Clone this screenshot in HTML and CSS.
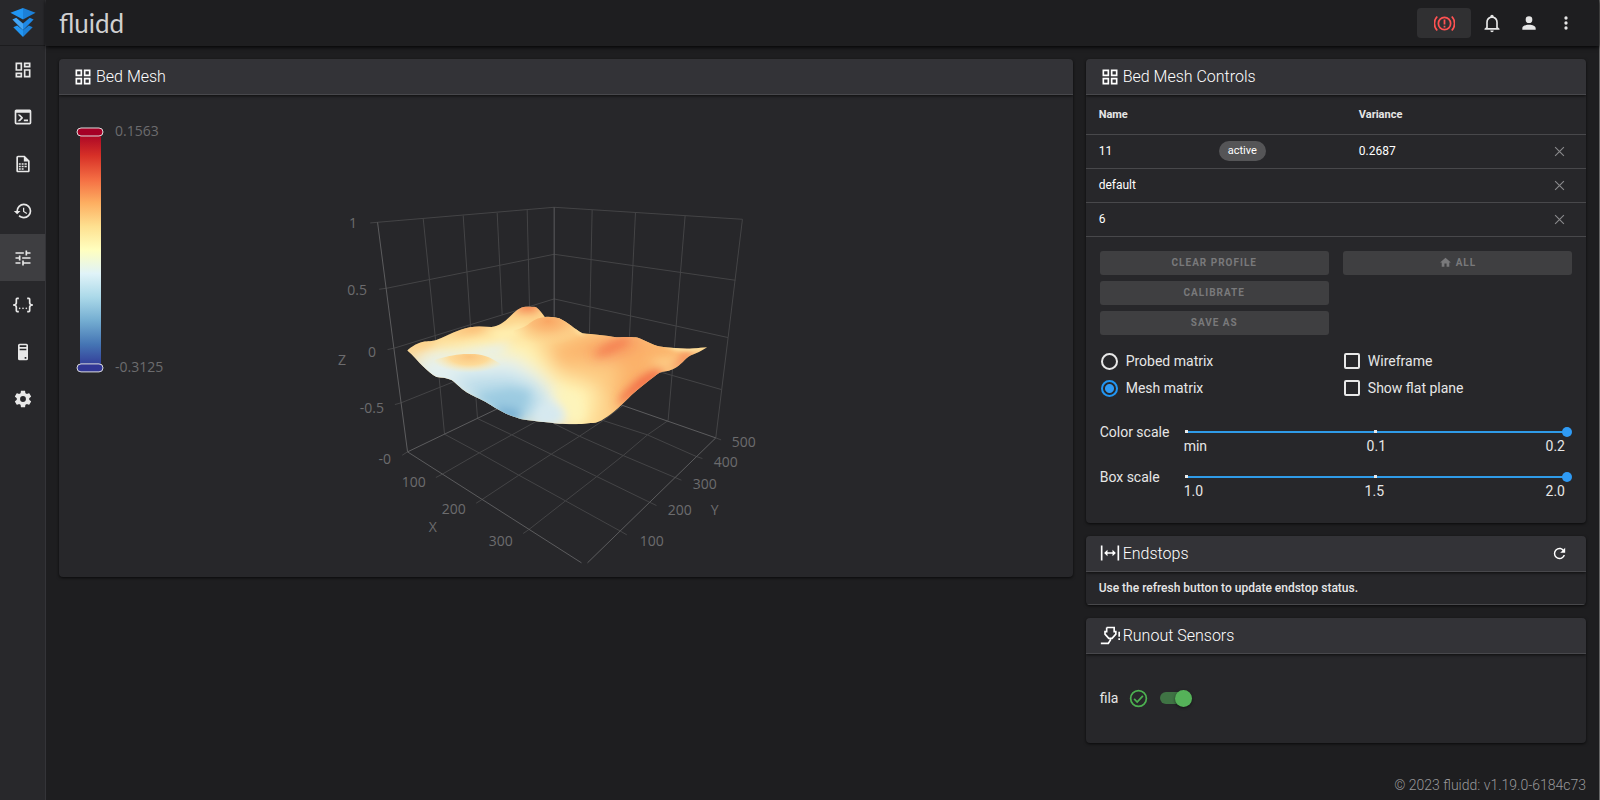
FILE: index.html
```
<!DOCTYPE html>
<html lang="en">

<head>
  <meta charset="UTF-8">
  <meta name="viewport" content="width=device-width, initial-scale=1.0">
  <title>fluidd</title>
  <link rel="stylesheet" href="styles.css">
</head>

<body>
  <!-- sidebar -->
  <nav class="sidebar">
    <a class="logo" href="#" aria-label="Home">
      <svg viewBox="0 0 26 30">
        <path fill="#2196f3" d="M0 5 13 0v12z" />
        <path fill="#1c80d8" d="M26 5 13 0v12z" />
        <path fill="#42a5f5" d="M2 12l4-2 7 6v7z" />
        <path fill="#1e88e5" d="M24 12l-4-2-7 6v7z" />
        <path fill="#2196f3" d="M3 20l4-2 6 5v7z" />
        <path fill="#1c80d8" d="M23 20l-4-2-6 5v7z" />
      </svg>
    </a>
    <a class="nav-item" href="#" aria-label="Dashboard"><svg viewBox="0 0 24 24"><path d="M19,5V7H15V5H19M9,5V11H5V5H9M19,13V19H15V13H19M9,17V19H5V17H9M21,3H13V9H21V3M11,3H3V13H11V3M21,11H13V21H21V11M11,15H3V21H11V15Z" /></svg></a>
    <a class="nav-item" href="#" aria-label="Console"><svg viewBox="0 0 24 24"><path d="M20,19V7H4V19H20M20,3A2,2 0 0,1 22,5V19A2,2 0 0,1 20,21H4A2,2 0 0,1 2,19V5C2,3.89 2.9,3 4,3H20M13,17V15H18V17H13M9.58,13L5.57,9H8.4L11.7,12.3C12.09,12.69 12.09,13.33 11.7,13.72L8.42,17H5.59L9.58,13Z" /></svg></a>
    <a class="nav-item" href="#" aria-label="Jobs"><svg viewBox="0 0 24 24"><path d="M14 2H6C4.89 2 4 2.9 4 4V20C4 21.11 4.89 22 6 22H18C19.11 22 20 21.11 20 20V8L14 2M18 20H6V4H13V9H18V20M7 11H9.3V13H7V11M10.4 11H12.7V13H10.4V11M13.8 11H16.5V13H13.8V11M7 14H9.3V16H7V14M10.4 14H12.7V16H10.4V14M13.8 14H16.5V16H13.8V14M7 17H9.3V19H7V17M10.4 17H12.7V19H10.4V17Z" /></svg></a>
    <a class="nav-item" href="#" aria-label="History"><svg viewBox="0 0 24 24"><path d="M13.5,8H12V13L16.28,15.54L17,14.33L13.5,12.25V8M13,3A9,9 0 0,0 4,12H1L4.96,16.03L9,12H6A7,7 0 0,1 13,5A7,7 0 0,1 20,12A7,7 0 0,1 13,19C11.07,19 9.32,18.21 8.06,16.94L6.64,18.36C8.27,20 10.5,21 13,21A9,9 0 0,0 22,12A9,9 0 0,0 13,3" /></svg></a>
    <a class="nav-item active" href="#" aria-label="Tune"><svg viewBox="0 0 24 24"><path d="M3,17V19H9V17H3M3,5V7H13V5H3M13,21V19H21V17H13V15H11V21H13M7,9V11H3V13H7V15H9V9H7M21,13V11H11V13H21M15,9H17V7H21V5H17V3H15V9Z" /></svg></a>
    <a class="nav-item" href="#" aria-label="Configuration"><svg viewBox="0 0 24 24"><path d="M5,3H7V5H5V10A2,2 0 0,1 3,12A2,2 0 0,1 5,14V19H7V21H5C3.93,20.73 3,20.1 3,19V15A2,2 0 0,0 1,13H0V11H1A2,2 0 0,0 3,9V5A2,2 0 0,1 5,3M19,3A2,2 0 0,1 21,5V9A2,2 0 0,0 23,11H24V13H23A2,2 0 0,0 21,15V19A2,2 0 0,1 19,21H17V19H19V14A2,2 0 0,1 21,12A2,2 0 0,1 19,10V5H17V3H19Z" /><circle cx="8" cy="16" r="1" /><circle cx="12" cy="16" r="1" /><circle cx="16" cy="16" r="1" /></svg></a>
    <a class="nav-item" href="#" aria-label="System"><svg viewBox="0 0 24 24"><path d="M8,2H16A2,2 0 0,1 18,4V20A2,2 0 0,1 16,22H8A2,2 0 0,1 6,20V4A2,2 0 0,1 8,2M8,4V6H16V4H8M16,8H8V10H16V8M16,18H14V20H16V18Z" /></svg></a>
    <a class="nav-item" href="#" aria-label="Settings"><svg viewBox="0 0 24 24"><path d="M12,15.5A3.5,3.5 0 0,1 8.5,12A3.5,3.5 0 0,1 12,8.5A3.5,3.5 0 0,1 15.5,12A3.5,3.5 0 0,1 12,15.5M19.43,12.97C19.47,12.65 19.5,12.33 19.5,12C19.5,11.67 19.47,11.34 19.43,11L21.54,9.37C21.73,9.22 21.78,8.95 21.66,8.73L19.66,5.27C19.54,5.05 19.27,4.96 19.05,5.05L16.56,6.05C16.04,5.66 15.5,5.32 14.87,5.07L14.5,2.42C14.46,2.18 14.25,2 14,2H10C9.75,2 9.54,2.18 9.5,2.42L9.13,5.07C8.5,5.32 7.96,5.66 7.44,6.05L4.95,5.05C4.73,4.96 4.46,5.05 4.34,5.27L2.34,8.73C2.21,8.95 2.27,9.22 2.46,9.37L4.57,11C4.53,11.34 4.5,11.67 4.5,12C4.5,12.33 4.53,12.65 4.57,12.97L2.46,14.63C2.27,14.78 2.21,15.05 2.34,15.27L4.34,18.73C4.46,18.95 4.73,19.03 4.95,18.95L7.44,17.94C7.96,18.34 8.5,18.68 9.13,18.93L9.5,21.58C9.54,21.82 9.75,22 10,22H14C14.25,22 14.46,21.82 14.5,21.58L14.87,18.93C15.5,18.67 16.04,18.34 16.56,17.94L19.05,18.95C19.27,19.03 19.54,18.95 19.66,18.73L21.66,15.27C21.78,15.05 21.73,14.78 21.54,14.63L19.43,12.97Z" /></svg></a>
  </nav>

  <div class="page">
    <!-- top bar -->
    <header class="app-bar">
      <span class="brand">fluidd</span>
      <div class="app-actions">
        <button class="estop" aria-label="Emergency stop">
          <svg viewBox="0 0 24 24">
            <circle cx="12" cy="12" r="7" />
            <path d="M12 7.500V13M12 14.500v2M3.700 4a11.500 11.500 0 0 0 0 16M20.300 4a11.500 11.500 0 0 1 0 16" />
          </svg>
        </button>
        <button class="icon-btn" aria-label="Notifications"><svg viewBox="0 0 24 24"><path d="M10 21H14C14 22.100 13.100 23 12 23S10 22.100 10 21M21 19V20H3V19L5 17V11C5 7.900 7 5.200 10 4.300V4C10 2.900 10.900 2 12 2S14 2.900 14 4V4.300C17 5.200 19 7.900 19 11V17L21 19M17 11C17 8.200 14.800 6 12 6S7 8.200 7 11V18H17V11Z" /></svg></button>
        <button class="icon-btn" aria-label="Account"><svg viewBox="0 0 24 24"><path d="M12,4A4,4 0 0,1 16,8A4,4 0 0,1 12,12A4,4 0 0,1 8,8A4,4 0 0,1 12,4M12,14C16.42,14 20,15.79 20,18V20H4V18C4,15.79 7.58,14 12,14Z" /></svg></button>
        <button class="icon-btn" aria-label="Menu"><svg viewBox="0 0 24 24"><circle cx="12" cy="6" r="2" /><circle cx="12" cy="12" r="2" /><circle cx="12" cy="18" r="2" /></svg></button>
      </div>
    </header>

    <main class="content">
      <!-- bed mesh -->
      <section class="card card-mesh">
        <h2 class="card-title">
          <svg viewBox="0 0 24 24"><path fill-rule="evenodd" d="M3 3H11V11H3ZM5 5V9H9V5ZM13 3H21V11H13ZM15 5V9H19V5ZM3 13H11V21H3ZM5 15V19H9V15ZM13 13H21V21H13ZM15 15V19H19V15Z" /></svg>
          Bed Mesh
        </h2>
        <svg class="chart" viewBox="59 95 1014 482" preserveAspectRatio="xMidYMid meet">
          <defs>
            <linearGradient id="scale" x1="0" y1="0" x2="0" y2="1">
              <stop offset="0" stop-color="#a50026" />
              <stop offset=".1" stop-color="#d73027" />
              <stop offset=".2" stop-color="#f46d43" />
              <stop offset=".3" stop-color="#fdae61" />
              <stop offset=".4" stop-color="#fee090" />
              <stop offset=".5" stop-color="#ffffbf" />
              <stop offset=".6" stop-color="#e0f3f8" />
              <stop offset=".7" stop-color="#abd9e9" />
              <stop offset=".8" stop-color="#74add1" />
              <stop offset=".9" stop-color="#4575b4" />
              <stop offset="1" stop-color="#313695" />
            </linearGradient>
            <radialGradient id="hill-fill" cx=".5" cy=".3" r=".55">
              <stop offset="0" stop-color="#fbc57e" />
              <stop offset=".5" stop-color="#fdda98" />
              <stop offset="1" stop-color="#fdeeb4" stop-opacity="0" />
            </radialGradient>
            <radialGradient id="knoll-fill" cx=".5" cy=".2" r=".6">
              <stop offset="0" stop-color="#f9a764" />
              <stop offset=".4" stop-color="#fbbd78" />
              <stop offset="1" stop-color="#fdd791" stop-opacity="0" />
            </radialGradient>
            <filter id="soft" x="-60%" y="-60%" width="220%" height="220%">
              <feGaussianBlur stdDeviation="15" />
            </filter>
            <filter id="softer" x="-50%" y="-50%" width="200%" height="200%">
              <feGaussianBlur stdDeviation="26" />
            </filter>
            <filter id="ridge" x="-50%" y="-50%" width="200%" height="200%">
              <feGaussianBlur stdDeviation="6" />
            </filter>
            <clipPath id="mesh">
              <path d="M22 167C35 155 55 143 75 140C90 138 100 140 115 133C145 122 175 103 210 97C235 93 255 96 275 96C300 92 315 80 335 60C355 42 365 35 385 35C400 36 405 35 410 38C420 45 428 58 435 66C450 64 465 67 478 70C505 83 525 103 548 115C580 118 620 122 650 127C680 126 700 125 712 128C735 135 755 150 780 155C820 160 850 163 880 161C895 160 910 157 922 157C905 168 890 175 872 182C855 190 845 212 820 222C805 230 790 228 780 233C755 250 720 280 695 300C670 325 640 355 615 370C600 380 590 384 580 384C560 384 545 388 520 388C490 388 465 386 450 383C425 381 405 378 385 376C355 372 335 362 320 357C295 345 275 332 255 320C235 308 215 302 200 292C180 278 170 265 155 255C140 248 125 248 110 246C95 240 85 228 70 215C55 202 40 180 22 167Z" />
            </clipPath>
            <clipPath id="hill">
              <path d="M60 210C130 184 170 177 205 177C245 176 268 183 300 206L360 270H60Z" />
            </clipPath>
            <clipPath id="knoll">
              <path d="M310 115C350 104 375 98 390 84C405 72 420 66 440 66L620 60V260H280Z" />
            </clipPath>
          </defs>

          <!-- color scale -->
          <rect x="80" y="132" width="21" height="236" fill="url(#scale)" />
          <rect class="handle" x="77" y="128" width="26" height="8" rx="4" fill="#a50026" />
          <rect class="handle" x="77" y="364" width="26" height="8" rx="4" fill="#313695" />
          <text x="115" y="136">0.1563</text>
          <text x="115" y="372">-0.3125</text>

          <!-- walls -->
          <g class="grid" transform="translate(320 190) scale(.33333)">
            <path d="M151 99L173 97L703 52L1268 88M178 298L200 295L703 193L1247 271M203 479L222 475L703 327L1225 443M225 644L243 639L703 455L1205 599" />
            <path d="M310 86L347 450L374 733M430 77L452 408L473 686M532 69L547 375M622 60L629 350M817 60L809 430M947 69L929 440M1096 78L1064 470L1045 692M1268 88L1225 443L1188 744" />
            <path class="axis" d="M173 97L222 475L263 786M703 52V380" />
          </g>
          <!-- floor -->
          <g class="grid" transform="translate(320 380) scale(.33333)">
            <path d="M348 293L367 283L478 219L576 165L703 95M469 370L485 360L597 286L694 223L779 169L850 122L910 76M610 461L626 450L737 363L831 290L910 227L983 165L1045 122" />
            <path d="M374 163L478 219L597 286L737 363L902 454L921 465M473 116L576 165L694 223L831 290L989 367L1010 377M700 130L779 169L910 227L1066 293L1085 301M780 98L850 122L983 165L1130 230L1148 236M1188 174L1204 180M247 226L263 216" />
            <path class="axis" d="M263 216L785 549M803 549L1188 174M263 216L703 5L1188 174" />
          </g>

          <!-- mesh surface -->
          <g transform="translate(400 295) scale(.33333)">
            <g clip-path="url(#mesh)">
              <rect width="960" height="420" fill="#fdd48c" />
              <g filter="url(#softer)">
                <path fill="#fff3b4" d="M60 160L260 120L400 130L430 190L470 240L590 280L570 400H460L360 260L60 200Z" />
                <path fill="#fbb26b" d="M450 160L560 120L700 110L900 150L790 220L640 390L650 300L560 250L490 220Z" />
                <path fill="#fdcb82" d="M480 190L660 200L650 290L560 260Z" />
                <path fill="#e2f0f2" d="M20 190L100 185L340 185L420 240L470 300L500 400L330 400L60 270Z" />
                <path fill="#b5d9e8" d="M150 250L330 240L410 270L440 320L400 390L300 380Z" />
                <path fill="#f6895a" d="M560 185L640 135L740 110L700 155L610 195Z" />
              </g>
              <g filter="url(#soft)">
                <path fill="#fbb871" d="M150 120L220 85L280 90L230 112Z" />
                <path fill="#fdc981" d="M30 160L90 130L110 142L60 162Z" />
                <path fill="#f4814f" d="M340 50L375 10L425 25L405 52Z" />
                <path fill="#fff1b2" d="M260 110L360 92L390 90L370 118L300 140Z" />
                <path fill="#e3f0f3" d="M60 188L160 172L260 158L340 145L290 178L180 175L110 192Z" />
                <path fill="#9ccbe1" d="M220 300L330 280L390 290L380 340L330 370Z" />
                <path fill="#79b1d3" d="M280 335L340 340L370 355L350 385L300 370Z" />
                <path fill="#f1603f" d="M720 250L770 222L800 230L700 300L655 335L665 305Z" />
                <path fill="#f4764b" d="M860 170L880 165L870 190L830 225L810 220Z" />
                <path fill="#f37048" d="M575 185L620 155L690 125L680 145L610 178Z" />
                <path fill="#fdcf88" d="M740 195L800 190L840 205L790 218Z" />
                <path fill="#d6e9f0" d="M420 330L450 325L490 345L490 375L440 395L400 385Z" />
                <path fill="#fdf4bb" d="M460 280L540 300L550 370L520 390L500 340Z" />
              </g>
              <g filter="url(#ridge)">
                <path fill="#fff3b8" d="M510 90L545 108L556 120L535 114Z" />
                <path fill="#fdf0b0" d="M790 150L925 154L880 167L830 166Z" />
              </g>
              <g clip-path="url(#knoll)">
                <ellipse cx="445" cy="115" rx="105" ry="60" fill="url(#knoll-fill)" />
              </g>
              <g clip-path="url(#hill)">
                <ellipse cx="208" cy="203" rx="105" ry="44" fill="url(#hill-fill)" />
              </g>
            </g>
          </g>

          <!-- axis labels -->
          <g text-anchor="end">
            <text x="357" y="228">1</text>
            <text x="367" y="295">0.5</text>
            <text x="376" y="357">0</text>
            <text x="384" y="413">-0.5</text>
            <text x="391" y="464">-0</text>
            <text x="426" y="487">100</text>
            <text x="466" y="514">200</text>
            <text x="513" y="546">300</text>
          </g>
          <g>
            <text x="338" y="365">Z</text>
            <text x="429" y="532">X</text>
            <text x="711" y="515">Y</text>
            <text x="732" y="447">500</text>
            <text x="714" y="467">400</text>
            <text x="693" y="489">300</text>
            <text x="668" y="515">200</text>
            <text x="640" y="546">100</text>
          </g>
        </svg>
      </section>

      <div class="side">
        <!-- bed mesh controls -->
        <section class="card">
          <h2 class="card-title">
            <svg viewBox="0 0 24 24"><path fill-rule="evenodd" d="M3 3H11V11H3ZM5 5V9H9V5ZM13 3H21V11H13ZM15 5V9H19V5ZM3 13H11V21H3ZM5 15V19H9V15ZM13 13H21V21H13ZM15 15V19H19V15Z" /></svg>
            Bed Mesh Controls
          </h2>
          <table class="profiles">
            <thead>
              <tr>
                <th class="col-name">Name</th>
                <th class="col-state"></th>
                <th>Variance</th>
                <th class="col-remove"></th>
              </tr>
            </thead>
            <tbody>
              <tr>
                <td>11</td>
                <td><span class="chip">active</span></td>
                <td>0.2687</td>
                <td class="col-remove"><button class="remove" aria-label="Remove 11"><svg viewBox="0 0 10 10"><path d="M1 1l8 8M9 1l-8 8" /></svg></button></td>
              </tr>
              <tr>
                <td>default</td>
                <td></td>
                <td></td>
                <td class="col-remove"><button class="remove" aria-label="Remove default"><svg viewBox="0 0 10 10"><path d="M1 1l8 8M9 1l-8 8" /></svg></button></td>
              </tr>
              <tr>
                <td>6</td>
                <td></td>
                <td></td>
                <td class="col-remove"><button class="remove" aria-label="Remove 6"><svg viewBox="0 0 10 10"><path d="M1 1l8 8M9 1l-8 8" /></svg></button></td>
              </tr>
            </tbody>
          </table>

          <div class="controls">
            <div class="two-col">
              <div class="btn-list">
                <button class="btn" disabled>CLEAR PROFILE</button>
                <button class="btn" disabled>CALIBRATE</button>
                <button class="btn" disabled>SAVE AS</button>
              </div>
              <div class="btn-list">
                <button class="btn" disabled><svg viewBox="0 0 24 24"><path d="M10,20V14H14V20H19V12H22L12,3L2,12H5V20H10Z" /></svg>ALL</button>
              </div>
            </div>

            <div class="two-col options">
              <div class="option-list">
                <label><input type="radio" name="matrix">Probed matrix</label>
                <label><input type="radio" name="matrix" checked>Mesh matrix</label>
              </div>
              <div class="option-list">
                <label><input type="checkbox">Wireframe</label>
                <label><input type="checkbox">Show flat plane</label>
              </div>
            </div>

            <div class="slider-row">
              <label for="color-scale">Color scale</label>
              <div class="slider">
                <input id="color-scale" type="range" min="0" max="0.2" step="0.1" value="0.2">
                <div class="ticks"><span>min</span><span>0.1</span><span>0.2</span></div>
              </div>
            </div>
            <div class="slider-row">
              <label for="box-scale">Box scale</label>
              <div class="slider">
                <input id="box-scale" type="range" min="1" max="2" step="0.5" value="2">
                <div class="ticks"><span>1.0</span><span>1.5</span><span>2.0</span></div>
              </div>
            </div>
          </div>
        </section>

        <!-- endstops -->
        <section class="card">
          <h2 class="card-title">
            <svg viewBox="0 0 24 24"><path d="M9,11H15V8L19,12L15,16V13H9V16L5,12L9,8V11M1,21V3H3V21H1M21,21V3H23V21H21Z" /></svg>
            Endstops
            <button class="refresh" aria-label="Refresh"><svg viewBox="0 0 24 24"><path d="M17.65,6.35C16.2,4.9 14.21,4 12,4A8,8 0 0,0 4,12A8,8 0 0,0 12,20C15.73,20 18.84,17.45 19.73,14H17.65C16.83,16.33 14.61,18 12,18A6,6 0 0,1 6,12A6,6 0 0,1 12,6C13.66,6 15.14,6.69 16.22,7.78L13,11H20V4L17.65,6.35Z" /></svg></button>
          </h2>
          <p class="hint">Use the refresh button to update endstop status.</p>
        </section>

        <!-- runout sensors -->
        <section class="card">
          <h2 class="card-title">
            <svg viewBox="0 0 24 24" class="stroke-icon"><path d="M8 3h9v5h2v3l-4.500 5h-4L6 11V8h2V3M12.500 16v2l-2.500 4H1M23 8v6M23 16v2" /></svg>
            Runout Sensors
          </h2>
          <div class="sensor">
            <label for="fila">fila</label>
            <svg class="ok" viewBox="0 0 24 24"><circle cx="12" cy="12" r="9" /><path d="M7 12.500l3.500 3.500L17 9" /></svg>
            <input id="fila" class="switch" type="checkbox" role="switch" checked>
          </div>
        </section>
      </div>
    </main>

    <footer class="footer">© 2023 fluidd: v1.19.0-6184c73</footer>
  </div>
</body>

</html>
```

FILE: styles.css
```
* {
  box-sizing: border-box;
  margin: 0;
  padding: 0;
}

body {
  display: flex;
  min-height: 100vh;
  background-color: #1e1e20;
  color: #e6e6e6;
  font-family: Roboto, sans-serif;
  font-size: 14px;
}

button {
  border: 0;
  background: none;
  color: inherit;
  font-family: inherit;
}

svg {
  fill: currentColor;
}

/* sidebar */
.sidebar {
  flex: none;
  width: 46px;
  background-color: #28282b;
  border-right: 1px solid #343438;
}

.logo {
  display: flex;
  align-items: center;
  justify-content: center;
  height: 46px;
  border-bottom: 1px solid #1c1c1e;
}

.logo svg {
  width: 26px;
  height: 29px;
}

.nav-item {
  display: flex;
  align-items: center;
  justify-content: center;
  height: 47px;
  color: #e8e8e8;
}

.nav-item svg {
  width: 20px;
  height: 20px;
}

.nav-item.active {
  background-color: #3e3e41;
}

/* top bar */
.page {
  display: flex;
  flex-direction: column;
  flex: 1;
  min-width: 0;
  border-right: 1px solid #666;
}

.app-bar {
  display: flex;
  align-items: center;
  justify-content: space-between;
  height: 46px;
  padding: 0 15px 0 13px;
  box-shadow: 0 1px 4px #000;
}

.brand {
  color: #d0d0d0;
  font-family: Lato, sans-serif;
  font-size: 26px;
  line-height: 40px;
}

.app-actions {
  display: flex;
  align-items: center;
}

.estop {
  display: flex;
  align-items: center;
  justify-content: center;
  width: 54px;
  height: 30px;
  margin-right: 2px;
  border-radius: 4px;
  background-color: #303032;
  color: #ff5252;
}

.estop svg {
  width: 21px;
  height: 21px;
  fill: none;
  stroke: currentColor;
  stroke-width: 2;
}

.icon-btn {
  display: flex;
  align-items: center;
  justify-content: center;
  width: 37px;
  height: 37px;
}

.icon-btn svg {
  width: 20px;
  height: 20px;
}

/* cards */
.content {
  display: grid;
  grid-template-columns: repeat(12, 1fr);
  align-items: start;
  gap: 13px;
  padding: 13px;
}

.card {
  border-radius: 4px;
  background-color: #27272a;
  box-shadow: 0 1px 3px rgba(0, 0, 0, .7);
  overflow: hidden;
}

.card-mesh {
  grid-column: span 8;
}

.side {
  display: flex;
  flex-direction: column;
  grid-column: span 4;
  gap: 13px;
}

.card-title {
  display: flex;
  align-items: center;
  gap: 3px;
  height: 36px;
  padding: 0 18px 0 14px;
  border-bottom: 1px solid #48484c;
  background-color: #333337;
  box-shadow: 0 1px 3px rgba(0, 0, 0, .7);
  color: #fff;
  font-size: 16px;
  font-weight: 300;
}

.card-title svg {
  width: 20px;
  height: 20px;
}

.card-title .stroke-icon {
  fill: none;
  stroke: currentColor;
  stroke-width: 2;
}

/* chart */
.chart {
  display: block;
  width: 100%;
}

.chart text {
  fill: #6c6c6e;
  font-family: "Open Sans", sans-serif;
  font-size: 14px;
}

.handle {
  stroke: #ddd;
  stroke-width: 1;
}

.grid path {
  fill: none;
  stroke: #444446;
  stroke-width: 1;
  vector-effect: non-scaling-stroke;
}

.grid .axis {
  stroke: #5c5c5e;
}

/* profile table */
.profiles {
  width: 100%;
  border-collapse: collapse;
  table-layout: fixed;
}

.profiles th {
  height: 39px;
  padding-left: 13px;
  border-bottom: 1px solid #48484b;
  font-size: 11px;
  font-weight: 700;
  text-align: left;
}

.profiles td {
  height: 34px;
  padding-left: 13px;
  border-bottom: 1px solid #48484b;
  color: #fff;
  font-size: 12px;
}

.profiles .col-name {
  width: 24%;
}

.profiles .col-state {
  width: 28%;
}

.profiles .col-remove {
  padding-right: 20px;
  text-align: right;
}

.chip {
  display: inline-block;
  padding: 0 9px;
  border-radius: 10px;
  background-color: #555557;
  font-size: 11px;
  line-height: 20px;
}

.remove {
  vertical-align: middle;
}

.remove svg {
  display: block;
  width: 11px;
  height: 11px;
  margin-right: 1px;
  stroke: #8a8a8c;
}

/* controls */
.controls {
  padding: 14px 14px 7px;
}

.two-col {
  display: grid;
  grid-template-columns: 1fr 1fr;
  gap: 14px;
}

.btn-list {
  display: flex;
  flex-direction: column;
  gap: 6px;
}

.btn {
  display: flex;
  align-items: center;
  justify-content: center;
  gap: 4px;
  height: 24px;
  border-radius: 3px;
  background-color: #3f3f41;
  color: #79797b;
  font-size: 10px;
  font-weight: 700;
  letter-spacing: 1px;
}

.btn svg {
  width: 13px;
  height: 13px;
}

.options {
  padding: 13px 0 24px;
}

.option-list label {
  display: flex;
  align-items: center;
  gap: 8px;
  height: 27px;
  padding-left: 1px;
}

.option-list input {
  width: 17px;
  height: 17px;
  border: 2px solid #e8e8e8;
  appearance: none;
}

.option-list input[type="radio"] {
  border-radius: 50%;
}

.option-list input[type="radio"]:checked {
  border-color: #2196f3;
  background: radial-gradient(circle, #2f9bf5 4px, transparent 5px);
}

.option-list input[type="checkbox"] {
  width: 16px;
  height: 16px;
  border-radius: 2px;
}

.option-list input[type="checkbox"]:checked {
  background-color: #2196f3;
}

.slider-row {
  display: flex;
  margin-bottom: 17px;
}

.slider-row label {
  width: 80px;
  line-height: 12px;
}

.slider {
  flex: 1;
}

.slider input {
  display: block;
  width: 100%;
  height: 12px;
  background:
    linear-gradient(#e8e8e8, #e8e8e8) 5px 50% / 3px 3px no-repeat,
    linear-gradient(#e8e8e8, #e8e8e8) 50% 50% / 3px 3px no-repeat,
    linear-gradient(#2f9be8, #2f9be8) 50% 50% / calc(100% - 10px) 2px no-repeat;
  appearance: none;
}

.slider input::-webkit-slider-thumb {
  width: 10px;
  height: 10px;
  border-radius: 50%;
  background-color: #2f9bf5;
  appearance: none;
}

.ticks {
  display: flex;
  justify-content: space-between;
  padding: 0 7px 0 4px;
  line-height: 16px;
}

/* endstops */
.refresh {
  display: flex;
  margin-left: auto;
}

.card-title .refresh svg {
  width: 17px;
  height: 17px;
}

.hint {
  padding: 0 13px;
  border-bottom: 1px solid #48484b;
  font-size: 12px;
  font-weight: 500;
  line-height: 32px;
}

/* runout sensors */
.sensor {
  display: flex;
  align-items: center;
  height: 89px;
  padding: 0 14px;
}

.ok {
  width: 21px;
  height: 21px;
  margin: 0 11px 0 10px;
  fill: none;
  stroke: #4caf50;
  stroke-width: 2;
}

.switch {
  display: flex;
  align-items: center;
  justify-content: flex-end;
  width: 32px;
  height: 12px;
  border-radius: 6px;
  background-color: #3f7344;
  appearance: none;
}

.switch::before {
  width: 17px;
  height: 17px;
  border-radius: 50%;
  background-color: #55b259;
  box-shadow: 0 1px 3px rgba(0, 0, 0, .5);
  content: "";
}

.footer {
  margin-top: auto;
  padding: 0 13px;
  color: #98989a;
  font-weight: 300;
  line-height: 30px;
  text-align: right;
}
```
